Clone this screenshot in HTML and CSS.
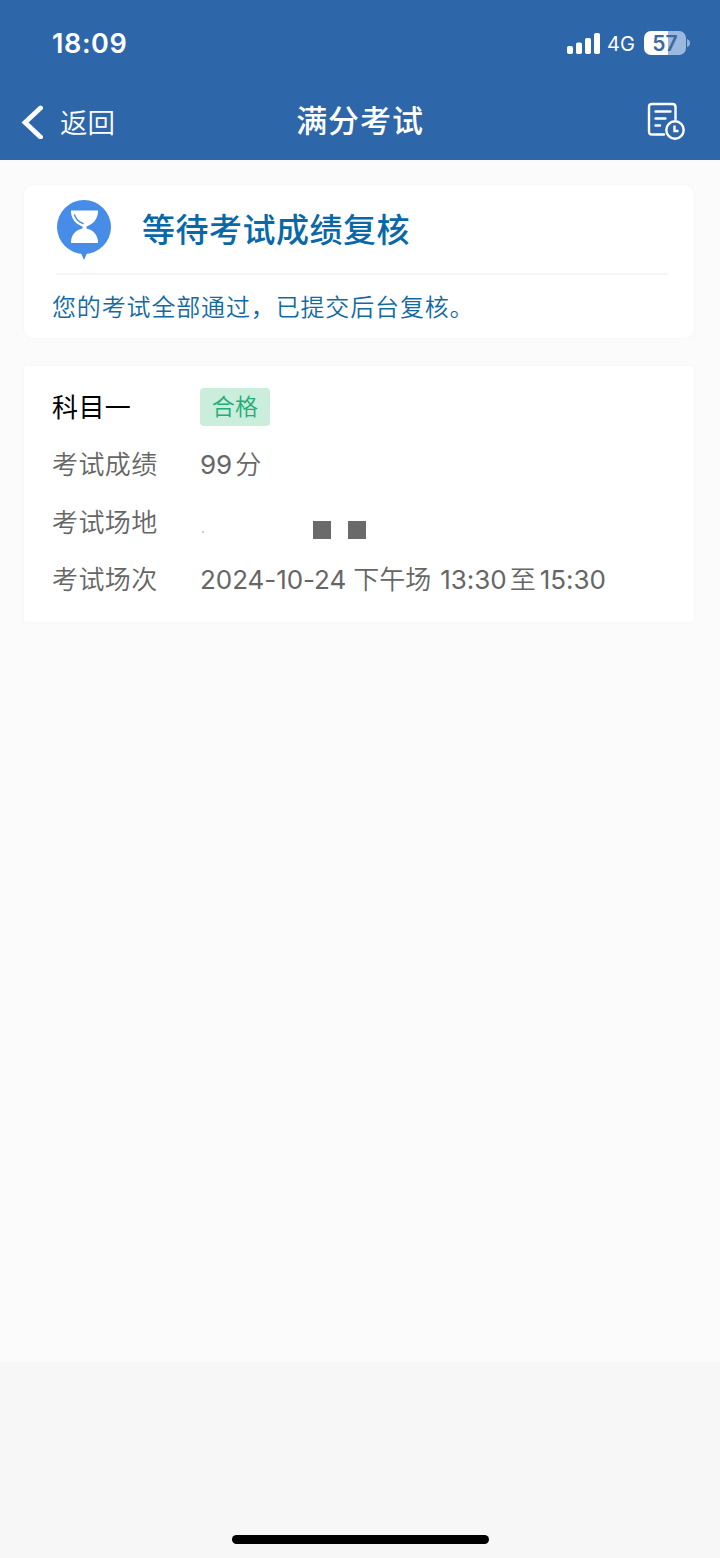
FILE: index.html
```html
<!DOCTYPE html>
<html lang="zh-CN">
<head>
<meta charset="utf-8">
<title>满分考试</title>
<link rel="stylesheet" href="styles.css">
</head>
<body>
<div class="screen">
  <header class="top">
    <div class="status">
      <span class="time">18:09</span>
      <div class="indicators">
        <svg class="signal" width="33" height="21" viewBox="0 0 33 21" fill="#fff"><rect x="0" y="13" width="6" height="8" rx="1.8"/><rect x="9" y="9.5" width="6" height="11.5" rx="1.8"/><rect x="18" y="5" width="6" height="16" rx="1.8"/><rect x="27" y="0" width="6" height="21" rx="1.8"/></svg>
        <span class="network">4G</span>
        <div class="battery"><span class="level">57</span></div>
        <svg class="cap" width="3" height="8" viewBox="0 0 3 8"><path d="M0 0Q3 1 3 4T0 8Z" fill="#93b2da"/></svg>
      </div>
    </div>
    <nav class="nav">
      <div class="back">
        <svg width="22" height="34" viewBox="0 0 22 34"><path d="M19.5 3 4 17.500 19.5 32" fill="none" stroke="#fff" stroke-width="4.8" stroke-linecap="round" stroke-linejoin="miter"/></svg>
        <span>返回</span>
      </div>
      <h1 class="title">满分考试</h1>
      <div class="action">
        <svg width="39" height="39" viewBox="0 0 39 39" fill="none" stroke="#fff" stroke-width="2.4" stroke-linecap="round"><path d="M17 32.5H5Q2 32.5 2 29.5V5Q2 2 5 2H25.5Q28.500 2 28.500 5V17"/><path d="M8.500 9.500H23.500M8.500 16.500H18.500M8.500 23.500H13"/><circle cx="28" cy="28" r="8.700"/><path d="M27.500 23.500V29H31.500" stroke-linecap="butt"/></svg>
      </div>
    </nav>
  </header>
  <main class="content">
    <section class="card notice">
      <div class="notice-head">
        <svg class="pin" width="56" height="62" viewBox="0 0 56 62"><path d="M24 51H32L28 60Z" fill="#478ce6"/><circle cx="28" cy="27" r="27" fill="#478ce6"/><path d="M15 10.500H42V12.500C41 20 37 24 30.500 26.500V28.500C37 30 41 34 42 41V43H15V41C16 34 20 30 26.500 28.500V26.500C20 24 16 20 15 12.500Z" fill="#fff"/><path d="M18.500 15C20 19 22.500 22 27 23.500" fill="none" stroke="#478ce6" stroke-width="1.500" stroke-linecap="round"/></svg>
        <h2>等待考试成绩复核</h2>
      </div>
      <p>您的考试全部通过，已提交后台复核。</p>
    </section>
    <section class="card detail">
      <div class="row"><span class="label subject">科目一</span><span class="badge">合格</span></div>
      <div class="row"><span class="label">考试成绩</span><span class="value"><span class="num">99</span><span class="unit">分</span></span></div>
      <div class="row"><span class="label">考试场地</span><span class="value masked"><i class="dot"></i><i class="block"></i><i class="block"></i></span></div>
      <div class="row"><span class="label">考试场次</span><span class="value"><span class="num">2024-10-24</span><span class="period">下午场</span><span class="num">13:30</span><span class="to">至</span><span class="num">15:30</span></span></div>
    </section>
  </main>
  <footer class="bottom"><div class="home"></div></footer>
</div>
</body>
</html>
```
FILE: styles.css
```css
* { box-sizing: border-box; }
body { margin: 0; background: #fbfbfb; font-family: Inter, "Noto Sans CJK SC", sans-serif; color: #666; }
h1, h2, p { margin: 0; }
svg { display: block; flex: none; }
.screen { width: 720px; height: 1558px; display: flex; flex-direction: column; overflow: hidden; }
.top { height: 160px; background: #2d66a9; color: #fff; flex: none; }
.status { height: 86px; padding: 0 30px 0 52px; display: flex; align-items: center; justify-content: space-between; }
.time { font-size: 27px; font-weight: 600; letter-spacing: .6px; }
.indicators { display: flex; align-items: center; }
.network { font-size: 20px; width: 37px; padding: 2px 0 0 7px; margin-right: 7px; }
.battery { width: 42px; height: 24px; border-radius: 7px; background: linear-gradient(90deg, #fff 57%, #9bb8de 57%); display: flex; align-items: center; justify-content: center; }
.level { font-size: 21px; font-weight: 600; color: #40699b; line-height: 24px; padding-top: 1px; }
.cap { margin-left: 1px; }
.nav { height: 71px; padding: 0 34px 0 21px; display: grid; grid-template-columns: 1fr auto 1fr; align-items: center; }
.back { display: flex; align-items: center; gap: 17px; font-size: 27.5px; font-weight: 350; line-height: 38px; }
.back span { padding-top: 2px; }
.title { font-size: 31px; font-weight: 500; letter-spacing: .9px; line-height: 44px; margin-right: -13px; padding-bottom: 1px; }
.action { justify-self: end; padding-bottom: 1px; }
.content { height: 1202px; padding: 25px 26px 0 24px; flex: none; }
.card { background: #fff; box-shadow: 0 0 2px 1px #f7f7f7; }
.notice { height: 153px; border-radius: 10px; margin-bottom: 28px; }
.notice-head { height: 90px; margin: 0 26px 0 32px; display: flex; align-items: center; gap: 30px; border-bottom: 2px solid #f5f5f5; }
.pin { margin-top: 3px; }
.notice h2 { color: #0868a8; font-size: 33px; font-weight: 500; letter-spacing: .5px; line-height: 48px; padding-top: 1px; }
.notice p { padding-left: 28px; font-size: 24px; font-weight: 350; line-height: 66px; letter-spacing: .85px; color: #136a9f; }
.detail { height: 256px; padding: 12px 0 0 28px; border-radius: 3px; }
.row { height: 57.5px; display: flex; align-items: center; }
.label { width: 148px; font-size: 26px; font-weight: 350; letter-spacing: .4px; line-height: 38px; padding-top: 2px; }
.subject { color: #000; font-weight: 400; }
.badge { width: 70px; height: 38px; border-radius: 4px; background: #caeddc; color: #23ad76; font-size: 23px; font-weight: 350; line-height: 39px; text-align: center; letter-spacing: .3px; }
.value { display: flex; align-items: center; font-size: 26px; font-weight: 350; line-height: 38px; white-space: nowrap; padding-top: 2px; }
.num { font-weight: 400; letter-spacing: -.05px; }
.unit { margin-left: 3px; }
.period { margin: 0 9px 0 7px; }
.to { margin: 0 4px 0 3px; }
.masked { padding-top: 16px; }
.dot { width: 2px; height: 2px; margin: 5px 109px 0 2px; background: #ccc; }
.block { width: 18px; height: 18px; margin-right: 17px; background: #6a6a6a; }
.bottom { flex: 1; background: #f7f7f7; display: flex; align-items: flex-end; justify-content: center; padding-bottom: 14px; }
.home { width: 257px; height: 9px; border-radius: 5px; background: #000; }
```
